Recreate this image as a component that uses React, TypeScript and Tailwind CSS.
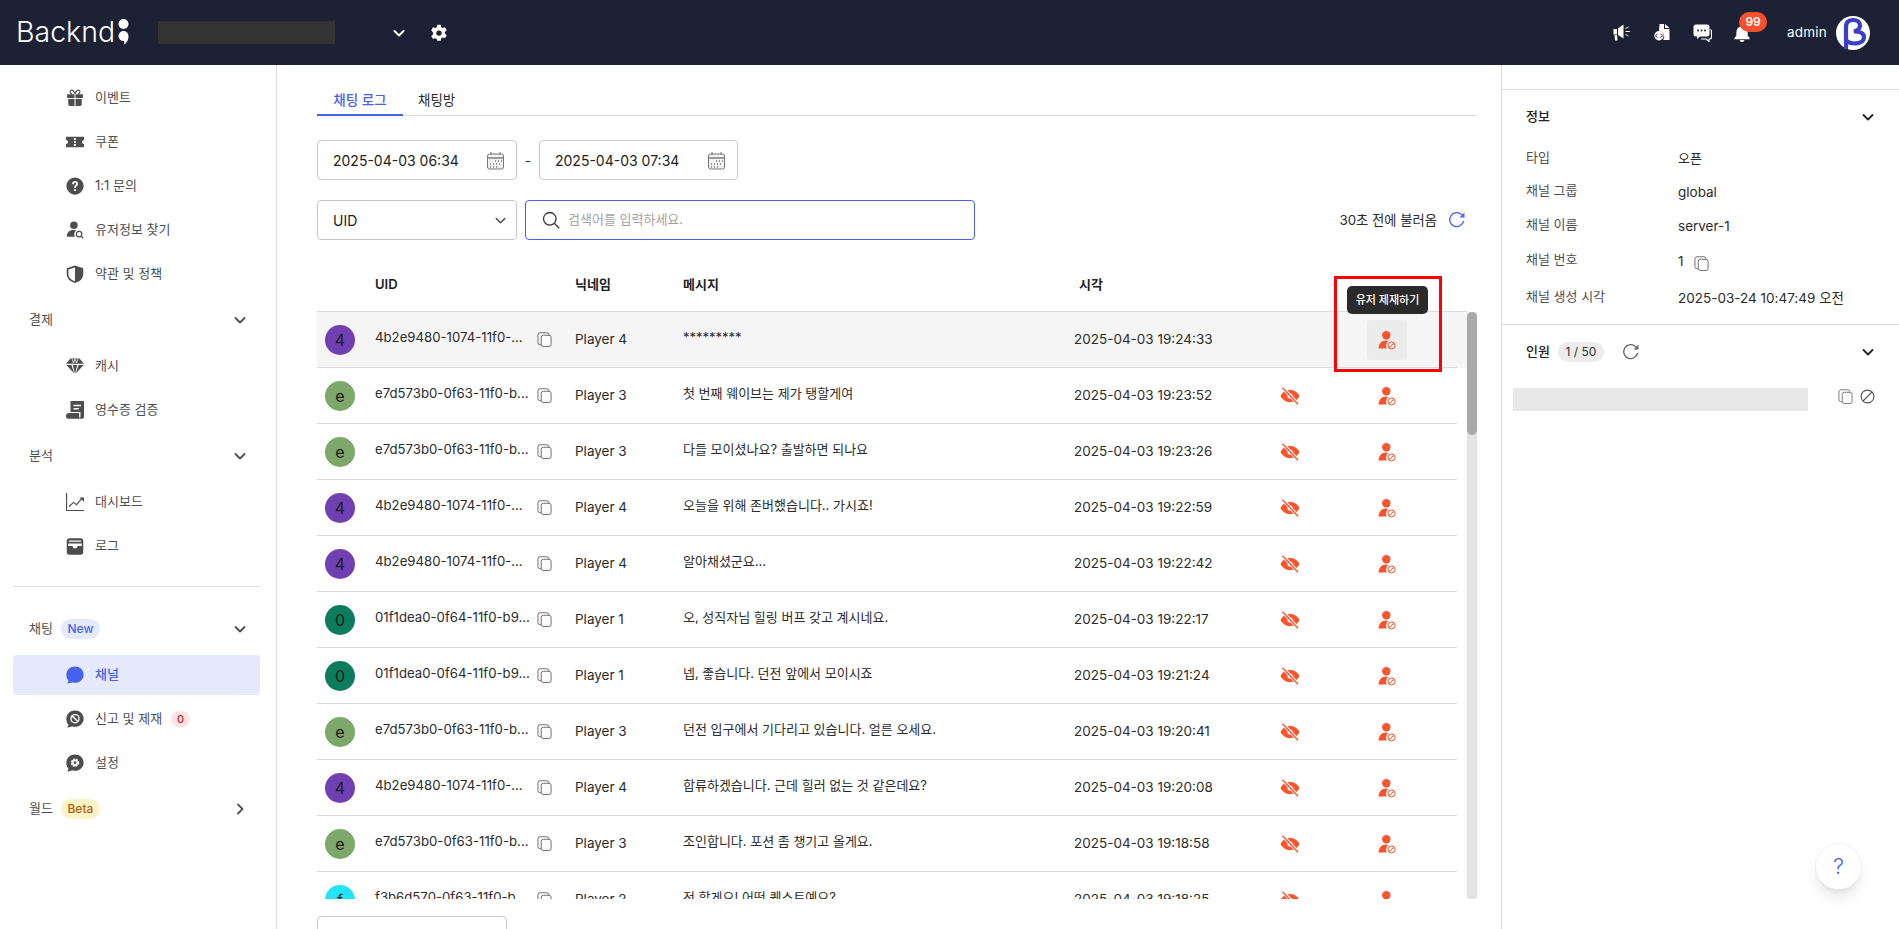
import React from "react";

const F = "font-['Inter','Noto_Sans_CJK_KR',sans-serif]";

function Svg({ s = 18, c = "#4d4d4d", vb = "0 0 24 24", children }: { s?: number; c?: string; vb?: string; children: React.ReactNode }) {
  return (
    <svg width={s} height={s} viewBox={vb} fill={c} className="shrink-0">
      {children}
    </svg>
  );
}

const Chevron = ({ s = 14, c = "#444", dir = "down", w = 1.8 }: { s?: number; c?: string; dir?: "down" | "right"; w?: number }) => (
  <svg width={s} height={s} viewBox="0 0 14 14" fill="none" stroke={c} strokeWidth={w} strokeLinecap="round" strokeLinejoin="round" className="shrink-0">
    {dir === "down" ? <path d="M2.5 5l4.5 4.5L11.5 5" /> : <path d="M5 2.5L9.5 7 5 11.5" />}
  </svg>
);

const Copy = ({ s = 15, c = "#666" }: { s?: number; c?: string }) => (
  <svg width={s} height={s} viewBox="0 0 16 16" fill="none" stroke={c} strokeWidth="1" className="shrink-0">
    <rect x="4.5" y="3.5" width="10.5" height="12" rx="2.2" fill="#fff" />
    <path d="M4.5 13.5H3A2 2 0 0 1 1 11.5V3a2.2 2.2 0 0 1 2.2-2.2h7.3a2 2 0 0 1 2 2v.7" />
  </svg>
);

const Refresh = ({ s = 18, c = "#555" }: { s?: number; c?: string }) => (
  <svg width={s} height={s} viewBox="0 0 18 18" fill="none" className="shrink-0">
    <path d="M15.6 10a7 7 0 1 1-2-6.400l1.200 1.200" stroke={c} strokeWidth="1.300" />
    <path d="M16.500 1.500v5h-5z" fill={c} />
  </svg>
);

const Calendar = () => (
  <svg width="19" height="19" viewBox="0 0 19 19" fill="none" stroke="#777" strokeWidth="1" className="shrink-0">
    <rect x="1.5" y="3" width="16" height="15" rx="2" fill="#f2f2f2" />
    <path d="M1.5 7h16" strokeWidth="1.4" />
    <path d="M5 1v3M14 1v3" />
    <path d="M9 10h1M12 10h1M15 10h1M4 13h1M7 13h1M10 13h1M13 13h1M4 16h1M7 16h1M10 16h1" strokeWidth="1.3" />
  </svg>
);

const UserBan = () => (
  <svg width="18" height="19" viewBox="0 0 18 19" className="shrink-0">
    <circle cx="8.300" cy="4.300" r="4.200" fill="#f9542e" />
    <path d="M.5 17.500c.3-4.500 3-8 7.100-8 1 0 1.900.2 2.700.5-1.500 1.400-3 4-1.700 7.500z" fill="#f9542e" />
    <circle cx="13.500" cy="14.500" r="3.500" fill="none" stroke="#f9542e" strokeWidth="1" />
    <path d="M11.200 16.800l4.600-4.600" stroke="#f9542e" strokeWidth="1" />
  </svg>
);

const EyeOff = () => (
  <svg width="20" height="18" viewBox="0 0 20 18" className="shrink-0">
    <path d="M.5 9C2.700 4.800 6 3 10 3s7.300 1.800 9.500 6c-2.200 4.200-5.500 6-9.500 6S2.700 13.200.5 9z" fill="#f9542e" />
    <circle cx="10" cy="9" r="2.600" fill="#fff" />
    <path d="M3 .8l14.500 15.800" stroke="#fff" strokeWidth="3.200" />
    <path d="M2.500 .8l15.500 16.400" stroke="#f9542e" strokeWidth="1.400" />
  </svg>
);

const icons: Record<string, React.ReactNode> = {
  gift: (
    <Svg>
      <path d="M1.500 7h9.800v5H1.500zM12.700 7h9.800v5h-9.800zM3 13.300h8.300V22.500H5.200a2.200 2.200 0 0 1-2.200-2.200zM12.700 13.300H21v7a2.200 2.200 0 0 1-2.200 2.200h-6.100z" />
      <path d="M12 6.500C10.500 2.500 8.500 1.200 6.800 1.700 4.800 2.300 5.200 6 8 6.500M12 6.500C13.500 2.500 15.500 1.200 17.200 1.700 19.200 2.300 18.800 6 16 6.500" fill="none" stroke="#4d4d4d" strokeWidth="1.500" />
    </Svg>
  ),
  ticket: (
    <Svg>
      <path fillRule="evenodd" d="M0 5h24v4.300a2.700 2.700 0 0 0 0 5.400V19H0v-4.300a2.700 2.700 0 0 0 0-5.400zM10.500 6.800v2.400h2.600V6.800zM10.500 10.800v2.400h2.600v-2.400zM10.500 14.800v2.400h2.600v-2.400z" />
    </Svg>
  ),
  help: (
    <Svg>
      <path fillRule="evenodd" d="M12 .5a11.500 11.500 0 1 1 0 23 11.500 11.500 0 0 1 0-23zM10.800 16.200v2.600h2.500v-2.600zM8.300 9.600h2.300c.1-1.200.6-1.800 1.500-1.800.8 0 1.400.5 1.400 1.300 0 .7-.4 1.100-1.100 1.700-1 .8-1.600 1.600-1.600 3.200v.6h2.400v-.5c0-.8.300-1.200 1.100-1.800 1-.8 1.700-1.700 1.700-3.200 0-2.300-1.700-3.700-3.900-3.700-2.400 0-4 1.500-4 4.200z" />
    </Svg>
  ),
  usersearch: (
    <Svg>
      <circle cx="10.500" cy="5.500" r="5" />
      <path d="M1 21c0-5.500 3.500-9 9-9 1.300 0 2.500.2 3.500.6-2.600 1.700-3.500 5.400-1.500 8.400z" />
      <circle cx="17.500" cy="17.500" r="3.600" fill="none" stroke="#4d4d4d" strokeWidth="1.500" />
      <path d="M20 20l3 3" stroke="#4d4d4d" strokeWidth="1.500" />
    </Svg>
  ),
  shield: (
    <Svg>
      <path fillRule="evenodd" d="M12 .5l11 3.800V12c0 6-4.500 10-11 12C5.500 22 1 18 1 12V4.300zM12 3.200L3.200 6v6c0 4.800 3.300 7.800 8.800 9.700z" />
    </Svg>
  ),
  gem: (
    <Svg>
      <path d="M6 2h12l6 7H0zM.4 10.500h6.900L11 22zM9.100 10.500h5.800L12 22.500zM16.700 10.500h6.900L13 22z" />
      <path d="M8 2.500l2 5.500 2-5.500 2 5.500 2-5.500" stroke="#fff" strokeWidth="1" fill="none" />
    </Svg>
  ),
  receipt: (
    <Svg>
      <path fillRule="evenodd" d="M6 0h18v21a2.500 2.500 0 0 1-2.500 2.500H18c1-1 1.300-2 1.300-3.500v-5.500H6zM10 5v2h10V5zM10 9.300v2h7v-2z" />
      <path d="M4 16h13.500V20c0 1.600.5 2.800 1 3.500H3A3 3 0 0 1 0 20.500v-.5A4 4 0 0 1 4 16z" />
    </Svg>
  ),
  chart: (
    <Svg>
      <path d="M0 0h1.500v22.500H24V24H0z" />
      <path d="M4 18l6-5.500 4 3 7-8" fill="none" stroke="#4d4d4d" strokeWidth="1.500" />
      <path d="M18 6h6v5.500z" />
    </Svg>
  ),
  inbox: (
    <Svg>
      <path fillRule="evenodd" d="M4.500 1.500h15A3.500 3.500 0 0 1 23 5v15a3.500 3.500 0 0 1-3.500 3.500h-15A3.500 3.500 0 0 1 1 20V5a3.500 3.500 0 0 1 3.500-3.500zM4 4.500v1.700h16V4.500zM3 8.500v3.500h5.500l1.500 3h4l1.500-3H21V8.500z" />
    </Svg>
  ),
  chat: (
    <Svg c="#4862f0">
      <path d="M12 .8c6.200 0 11.500 4.700 11.500 10.800S18.200 22.400 12 22.400c-1.400 0-2.700-.2-3.900-.7-1.500.9-3.800 1.600-6.800 1.500 1.200-1 2-2.300 2-3.500C1.400 17.800.5 14.800.5 11.600.5 5.500 5.800.8 12 .8z" />
    </Svg>
  ),
  chatban: (
    <Svg>
      <path d="M12 .8c6.200 0 11.500 4.700 11.500 10.800S18.200 22.400 12 22.400c-1.400 0-2.700-.2-3.900-.7-1.500.9-3.800 1.600-6.800 1.500 1.200-1 2-2.300 2-3.500C1.400 17.800.5 14.800.5 11.600.5 5.500 5.800.8 12 .8z" />
      <circle cx="12" cy="11.600" r="6.300" fill="#fff" />
      <circle cx="12" cy="11.600" r="4.500" fill="#4d4d4d" />
      <path d="M8.200 7.800l7.600 7.600" stroke="#fff" strokeWidth="2" />
    </Svg>
  ),
  chatgear: (
    <Svg>
      <path d="M12 .8c6.200 0 11.500 4.700 11.500 10.800S18.200 22.400 12 22.400c-1.400 0-2.700-.2-3.900-.7-1.500.9-3.800 1.600-6.800 1.500 1.200-1 2-2.300 2-3.500C1.400 17.800.5 14.800.5 11.600.5 5.500 5.800.8 12 .8z" />
      <circle cx="12" cy="11.600" r="4.300" fill="none" stroke="#fff" strokeWidth="2.600" strokeDasharray="2.500 1" />
      <circle cx="12" cy="11.600" r="3.800" fill="#fff" />
      <circle cx="12" cy="11.600" r="1.800" fill="#4d4d4d" />
    </Svg>
  ),
};

function NavItem({ icon, label, active, badge, mt = "" }: { icon: string; label: string; active?: boolean; badge?: React.ReactNode; mt?: string }) {
  return (
    <div className={`h-[40px] w-[247px] flex items-center pl-[53px] ml-[13px] rounded ${mt} ${active ? "bg-[#e4e9fb]" : ""}`}>
      {icons[icon]}
      <span className={`ml-[11px] text-[13px] ${active ? "text-[#4862f0] font-medium" : "text-[#4f4f4f]"}`}>{label}</span>
      {badge}
    </div>
  );
}

function Section({ label, badge, dir = "down", mt = "" }: { label: string; badge?: React.ReactNode; dir?: "down" | "right"; mt?: string }) {
  return (
    <div className={`h-[40px] flex items-center pl-[29px] w-[260px] ${mt}`}>
      <span className="text-[13px] text-[#4f4f4f]">{label}</span>
      {badge}
      <span className="ml-auto mr-[13px]">
        <Chevron s={14} c="#4f4f4f" dir={dir} />
      </span>
    </div>
  );
}

type Row = { a: string; bg: string; uid: string; p: string; m: string; t: string };
const P4 = { a: "4", bg: "#7040b3", uid: "4b2e9480-1074-11f0-...", p: "Player 4" };
const P3 = { a: "e", bg: "#7ea86b", uid: "e7d573b0-0f63-11f0-b...", p: "Player 3" };
const P1 = { a: "0", bg: "#0b7d5e", uid: "01f1dea0-0f64-11f0-b9...", p: "Player 1" };
const P2 = { a: "f", bg: "#22e3f7", uid: "f3b6d570-0f63-11f0-b...", p: "Player 2" };
const rows: Row[] = [
  { ...P4, m: "*********", t: "2025-04-03 19:24:33" },
  { ...P3, m: "첫 번째 웨이브는 제가 탱할게여", t: "2025-04-03 19:23:52" },
  { ...P3, m: "다들 모이셨나요? 출발하면 되나요", t: "2025-04-03 19:23:26" },
  { ...P4, m: "오늘을 위해 존버했습니다.. 가시죠!", t: "2025-04-03 19:22:59" },
  { ...P4, m: "알아채셨군요...", t: "2025-04-03 19:22:42" },
  { ...P1, m: "오, 성직자님 힐링 버프 갖고 계시네요.", t: "2025-04-03 19:22:17" },
  { ...P1, m: "넵, 좋습니다. 던전 앞에서 모이시죠", t: "2025-04-03 19:21:24" },
  { ...P3, m: "던전 입구에서 기다리고 있습니다. 얼른 오세요.", t: "2025-04-03 19:20:41" },
  { ...P4, m: "합류하겠습니다. 근데 힐러 없는 것 같은데요?", t: "2025-04-03 19:20:08" },
  { ...P3, m: "조인합니다. 포션 좀 챙기고 올게요.", t: "2025-04-03 19:18:58" },
  { ...P2, m: "전 할게요! 어떤 퀘스트예요?", t: "2025-04-03 19:18:25" },
];

function TableRow({ r, first }: { r: Row; first: boolean }) {
  return (
    <div className={`h-[56px] shrink-0 w-[1150px] ${first ? "bg-[#f5f5f5]" : ""}`}>
      <div className="h-[56px] w-[1140px] flex items-center text-[13.5px] text-[#2b2b2b] border-b border-[#dcdcdc]">
        <div className="w-[58px] pl-[8px] shrink-0">
          <div className="w-[30px] h-[30px] rounded-full flex items-center justify-center text-[#1a1a1a] text-[16px]" style={{ background: r.bg }}>
            {r.a}
          </div>
        </div>
        <div className="w-[158px] whitespace-nowrap shrink-0 -translate-y-[2px] text-[13.2px]">{r.uid}</div>
        <div className="w-[42px] shrink-0 pl-[4px]"><Copy /></div>
        <div className="w-[108px] shrink-0">{r.p}</div>
        <div className="w-[391px] shrink-0 -translate-y-[2px] text-[13px]">{r.m}</div>
        <div className="w-[206px] shrink-0">{r.t}</div>
        <div className="w-[20px] shrink-0 flex justify-center">{!first && <EyeOff />}</div>
        <div className={`w-[40px] ml-[67px] h-[40px] shrink-0 flex justify-center items-center rounded ${first ? "bg-[#ececec]" : ""}`}>
          <span className="translate-y-[1px]"><UserBan /></span>
        </div>
      </div>
    </div>
  );
}

function InfoRow({ k, children, h }: { k: string; children: React.ReactNode; h: string }) {
  return (
    <div className={`flex items-center ${h}`}>
      <div className="w-[152px] text-[13px] text-[#4f4f4f] -translate-y-[1px]">{k}</div>
      <div className="text-[13.5px] text-[#2b2b2b] flex items-center">{children}</div>
    </div>
  );
}

export default function App() {
  return (
    <div className={`${F} h-[929px] w-[1899px] overflow-hidden flex flex-col bg-white`}>
      <header className="h-[65px] shrink-0 bg-[#1c2233] flex items-center text-white">
        <div className="w-[158px] pl-[16px] flex items-center shrink-0">
          <span className="text-[28.5px] font-light leading-none">Backnd</span>
          <svg width="11" height="26" viewBox="0 0 11 26" fill="#fff" className="ml-[3px] -translate-y-[1px]">
            <circle cx="5.500" cy="5" r="5" />
            <path d="M.5 17a5 5 0 0 1 10 0c0 4-1.500 7-5 9 1-1.500 1-2.500.5-4A5 5 0 0 1 .5 17z" />
          </svg>
        </div>
        <div className="w-[177px] h-[23px] bg-[#333333] shrink-0" />
        <div className="ml-[57px]"><Chevron s={14} c="#fff" w={2} /></div>
        <div className="ml-[24px]">
          <svg width="18" height="18" viewBox="0 0 24 24" fill="#fff" fillRule="evenodd">
            <path d="M9.700 1h4.600l.7 3.300 1.800 1 3.200-1 2.300 4-2.500 2.300v2l2.500 2.300-2.300 4-3.200-1-1.800 1-.7 3.300H9.700L9 19.900l-1.800-1-3.200 1-2.300-4 2.500-2.300v-2L1.700 8.300l2.300-4 3.200 1 1.800-1zM12 8.500a3.600 3.600 0 1 0 0 7.200 3.600 3.600 0 0 0 0-7.200z" />
          </svg>
        </div>
        <div className="ml-auto flex items-center pr-[29px]">
          <div className="w-[40px] flex justify-center">
            <svg width="18" height="17" viewBox="0 0 18 17" fill="#fff">
              <path d="M.5 5h3.500v5.500H.5zM5 4.500L10.500.5v14L5 11zM1.500 11h2.500l.5 5.500H2z" />
              <path d="M12.500 4.500l3-1.500M12.500 7.500h4.500M12.500 10.500l3 1.500" stroke="#fff" strokeWidth="1" />
            </svg>
          </div>
          <div className="w-[40px] flex justify-center">
            <svg width="16" height="17" viewBox="0 0 16 17" fill="#fff">
              <path d="M5.500 0H10v5h5.500V16H9.200A5.500 5.500 0 0 0 5 7.200z" />
              <path d="M11 0l4.500 4H11z" />
              <circle cx="5" cy="11.800" r="4.700" />
              <path d="M3.500 9.800l-2 2 2 2M6.500 9.800l2 2-2 2" stroke="#1c2233" strokeWidth="1" fill="none" />
            </svg>
          </div>
          <div className="w-[40px] flex justify-center">
            <svg width="19" height="18" viewBox="0 0 19 18" fill="#fff">
              <path d="M3 .5h11a2.500 2.500 0 0 1 2.500 2.500v7a2.500 2.500 0 0 1-2.500 2.500H7L4 15v-2.500H3A2.500 2.500 0 0 1 .5 10V3A2.500 2.500 0 0 1 3 .5z" />
              <path d="M17.500 5.500A2 2 0 0 1 18.500 7v6a2 2 0 0 1-2 2H16v2.500L13 15H8" fill="none" stroke="#fff" strokeWidth="1.200" />
              <circle cx="5" cy="6.500" r="1" fill="#1c2233" /><circle cx="8.500" cy="6.500" r="1" fill="#1c2233" /><circle cx="12" cy="6.500" r="1" fill="#1c2233" />
            </svg>
          </div>
          <div className="relative w-[40px] mr-[25px] flex justify-center translate-y-[1px]">
            <svg width="16" height="17" viewBox="0 0 16 18" fill="#fff">
              <path d="M8 0a1.500 1.500 0 0 1 1.500 1.500C12.500 2.200 14 5 14 8v3.500l2 2V15H0v-1.500l2-2V8c0-3 1.500-5.800 4.500-6.500A1.500 1.500 0 0 1 8 0z" />
              <path d="M5.500 16h5a2.500 2 0 0 1-5 0z" />
            </svg>
            <span className="absolute left-[17px] top-[-13px] w-[28px] h-[20px] rounded-full bg-[#f4512c] text-white text-[12px] font-semibold flex items-center justify-center">99</span>
          </div>
          <span className="text-[13.5px] tracking-[0.2px] mr-[9px]">admin</span>
          <svg width="34" height="34" viewBox="0 0 34 34" fill="none">
            <circle cx="17" cy="17" r="17" fill="#fff" />
            <path d="M10 33V11C10 6 13 4 17 4 21.500 4 24 6 24 9.500 24 12.500 22 14.500 18 15.500 24 15.500 28 17.500 28 21 28 25 24 27.500 19 27.500 15 27.500 12 26.500 10 24" stroke="#3a3fc4" strokeWidth="4.200" />
          </svg>
        </div>
      </header>

      <div className="flex flex-1 min-h-0">
        <aside className="w-[277px] shrink-0 border-r border-[#dcdcdc] pt-[13px]">
          <div className="flex flex-col gap-[4px]">
            <NavItem icon="gift" label="이벤트" />
            <NavItem icon="ticket" label="쿠폰" />
            <NavItem icon="help" label="1:1 문의" />
            <NavItem icon="usersearch" label="유저정보 찾기" />
            <NavItem icon="shield" label="약관 및 정책" />
            <Section label="결제" mt="mt-[2px]" />
            <NavItem icon="gem" label="캐시" mt="mt-[2px]" />
            <NavItem icon="receipt" label="영수증 검증" />
            <Section label="분석" mt="mt-[2px]" />
            <NavItem icon="chart" label="대시보드" mt="mt-[2px]" />
            <NavItem icon="inbox" label="로그" />
          </div>
          <div className="ml-[13px] w-[247px] h-px bg-[#e0e0e0] mt-[20px]" />
          <div className="flex flex-col gap-[4px] mt-[22px]">
            <Section
              label="채팅"
              badge={<span className="ml-[8px] w-[39px] h-[20px] rounded-full bg-[#e4e9fb] text-[#4862f0] text-[12px] font-medium flex items-center justify-center">New</span>}
            />
            <NavItem icon="chat" label="채널" active mt="mt-[2px]" />
            <NavItem
              icon="chatban"
              label="신고 및 제재"
              badge={<span className="ml-[9px] w-[19px] h-[16px] rounded-full bg-[#fde3e3] text-[#c81e1e] text-[11px] font-medium flex items-center justify-center">0</span>}
            />
            <NavItem icon="chatgear" label="설정" />
            <Section
              label="월드"
              dir="right"
              mt="mt-[2px]"
              badge={<span className="ml-[8px] w-[39px] h-[20px] rounded-full bg-[#fef3c7] text-[#b45f06] text-[12px] font-medium flex items-center justify-center">Beta</span>}
            />
          </div>
        </aside>

        <main className="w-[1224px] shrink-0 pl-[40px] pr-[24px] flex flex-col min-h-0 overflow-hidden">
          <div className="h-[51px] shrink-0 flex items-end border-b border-[#dcdcdc]">
            <div className="w-[86px] h-[36px] -mb-px pt-[7px] border-b-[2px] border-[#4862f0] text-[#4862f0] text-[13.5px] font-medium flex items-center justify-center">채팅 로그</div>
            <div className="h-[36px] pt-[7px] pl-[15px] text-[#2b2b2b] text-[13.5px] flex items-center">채팅방</div>
          </div>

          <div className="flex items-center mt-[24px] shrink-0">
            <div className="w-[200px] h-[40px] border border-[#c9c9c9] rounded flex items-center justify-between pl-[15px] pr-[11px] text-[14px] text-[#222]">
              <span>2025-04-03 06:34</span><Calendar />
            </div>
            <span className="w-[22px] text-center text-[14px] text-[#333]">-</span>
            <div className="w-[199px] h-[40px] border border-[#c9c9c9] rounded flex items-center justify-between pl-[15px] pr-[11px] text-[14px] text-[#222]">
              <span>2025-04-03 07:34</span><Calendar />
            </div>
          </div>

          <div className="flex items-center mt-[20px] shrink-0">
            <div className="w-[200px] h-[40px] border border-[#c9c9c9] rounded flex items-center justify-between pl-[15px] pr-[9px] text-[14px] text-[#222]">
              <span>UID</span><Chevron s={13} c="#555" w={1.6} />
            </div>
            <div className="ml-[8px] w-[450px] h-[40px] border border-[#4862f0] rounded flex items-center pl-[16px]">
              <svg width="18" height="18" viewBox="0 0 18 18" fill="none" stroke="#333" strokeWidth="1.300">
                <circle cx="7.800" cy="7.800" r="6.300" /><path d="M12.400 12.400l4.800 4.800" />
              </svg>
              <span className="ml-[8px] text-[13px] text-[#a3a3a3]">검색어를 입력하세요.</span>
            </div>
            <div className="ml-auto flex items-center mr-[11px]">
              <span className="text-[13.3px] text-[#2b2b2b] translate-y-[1px]">30초 전에 불러옴</span>
              <span className="ml-[11px]"><Refresh s={18} c="#4862f0" /></span>
            </div>
          </div>

          <div className="flex flex-col h-[639px] w-[1160px] mt-[20px] shrink-0 relative">
            <div className="h-[52px] shrink-0 w-[1150px] flex items-center text-[13px] font-semibold text-[#222] border-b border-[#dcdcdc] pb-[1px]">
              <span className="ml-[58px] w-[200px]">UID</span>
              <span className="w-[108px]">닉네임</span>
              <span className="w-[396px]">메시지</span>
              <span>시각</span>
            </div>
            <div className="flex flex-1 min-h-0">
              <div className="w-[1150px] flex flex-col overflow-hidden">
                {rows.map((r, i) => <TableRow key={i} r={r} first={i === 0} />)}
              </div>
              <div className="w-[10px] bg-[#e3e3e3] shrink-0">
                <div className="h-[123px] bg-[#a9a9a9] rounded-[5px]" />
              </div>
            </div>
            <div className="absolute left-[1030px] top-[26px] w-[81px] h-[28px] bg-[#2a2a2a] rounded-[5px] text-white text-[11px] font-medium flex items-center justify-center whitespace-nowrap z-10">
              유저 제재하기
            </div>
            <div className="absolute left-[1017px] top-[16px] w-[108px] h-[96px] border-[3px] border-[#ff0000] z-10" />
          </div>

          <div className="w-[190px] h-[40px] mt-[17px] shrink-0 border border-[#c9c9c9] rounded" />
        </main>

        <aside className="flex-1 border-l border-[#dcdcdc] relative">
          <div className="h-[25px] border-b border-[#dcdcdc]" />
          <div className="pl-[24px] pr-[24px] h-[235px] border-b border-[#dcdcdc]">
            <div className="h-[53px] flex items-center justify-between text-[13px] font-medium text-[#222]">
              <span>정보</span><Chevron s={14} c="#222" />
            </div>
            <InfoRow k="타입" h="h-[32px]"><span className="text-[13px]">오픈</span></InfoRow>
            <InfoRow k="채널 그룹" h="h-[34px]">global</InfoRow>
            <InfoRow k="채널 이름" h="h-[34px]">server-1</InfoRow>
            <InfoRow k="채널 번호" h="h-[36px]"><span>1</span><span className="ml-[10px] translate-y-[2px]"><Copy s={15} /></span></InfoRow>
            <InfoRow k="채널 생성 시각" h="h-[38px]">2025-03-24 10:47:49 오전</InfoRow>
          </div>
          <div className="pl-[24px] pr-[24px] h-[54px] flex items-center">
            <span className="text-[13px] font-medium text-[#222]">인원</span>
            <span className="ml-[8px] w-[46px] h-[20px] bg-[#ececec] rounded-full text-[12px] text-[#333] flex items-center justify-center">1 / 50</span>
            <span className="ml-[18px]"><Refresh s={18} c="#666" /></span>
            <span className="ml-auto"><Chevron s={14} c="#222" /></span>
          </div>
          <div className="flex items-center pl-[11px] mt-[9px]">
            <div className="w-[295px] h-[23px] bg-[#e8e8e8]" />
            <span className="ml-[30px] -translate-y-[3px]"><Copy s={15} c="#777" /></span>
            <svg width="15" height="15" viewBox="0 0 15 15" fill="none" stroke="#555" strokeWidth="1.100" className="ml-[7px] -translate-y-[3px]">
              <circle cx="7.500" cy="7.500" r="6.400" /><path d="M3 12l9-9" />
            </svg>
          </div>
          <div className="absolute left-[313px] top-[778px] w-[47px] h-[47px] rounded-full bg-white border border-[#eee] shadow-lg flex items-center justify-center text-[#4862f0] text-[22px] font-light">?</div>
        </aside>
      </div>
    </div>
  );
}
